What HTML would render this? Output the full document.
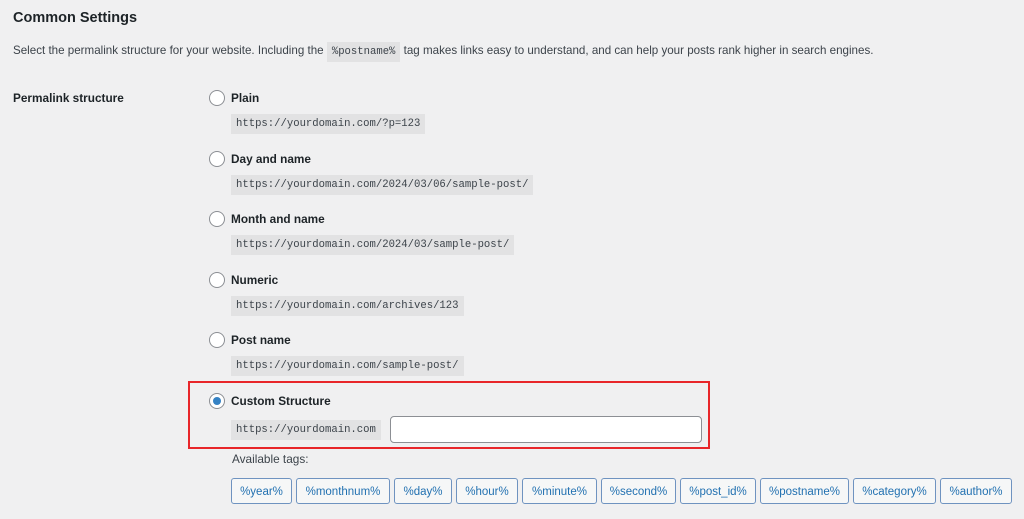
<!DOCTYPE html>
<html><head><style>
body{margin:0;width:1024px;height:519px;background:#f0f0f1;font-family:"Liberation Sans",sans-serif;color:#1d2327;position:relative;overflow:hidden}
.a{position:absolute;white-space:nowrap}
h2{position:absolute;left:13px;top:10px;margin:0;font-size:14.5px;font-weight:600}
.d{left:13px;top:44px;font-size:11.6px;color:#3c434a}
code{font-family:"Liberation Mono",monospace;font-size:10.6px;background:#e2e2e3;padding:4px 5px;color:#3c434a}
.r{position:absolute;left:209px;width:14px;height:14px;border:1px solid #8c8f94;border-radius:50%;background:#fff}
.l{left:231px;font-size:11.8px;font-weight:600}
.c{left:231px}
.t{position:absolute;top:478px;height:26px;border:1px solid #6f93c0;border-radius:3px;background:#f6f7f7;color:#2271b1;font-size:11.5px;line-height:26px;text-align:center;box-sizing:border-box}
</style></head><body>
<h2>Common Settings</h2>
<div class="a d">Select the permalink structure for your website. Including the <code>%postname%</code> tag makes links easy to understand, and can help your posts rank higher in search engines.</div>
<div class="a" style="left:13px;top:91px;font-size:11.8px;font-weight:600">Permalink structure</div>

<div class="r" style="top:90px"></div><div class="a l" style="top:91px">Plain</div>
<div class="a c" style="top:113px"><code>https://yourdomain.com/?p=123</code></div>
<div class="r" style="top:151px"></div><div class="a l" style="top:152px">Day and name</div>
<div class="a c" style="top:174px"><code>https://yourdomain.com/2024/03/06/sample-post/</code></div>
<div class="r" style="top:211px"></div><div class="a l" style="top:212px">Month and name</div>
<div class="a c" style="top:234px"><code>https://yourdomain.com/2024/03/sample-post/</code></div>
<div class="r" style="top:272px"></div><div class="a l" style="top:273px">Numeric</div>
<div class="a c" style="top:295px"><code>https://yourdomain.com/archives/123</code></div>
<div class="r" style="top:332px"></div><div class="a l" style="top:333px">Post name</div>
<div class="a c" style="top:355px"><code>https://yourdomain.com/sample-post/</code></div>

<div class="a" style="left:188px;top:381px;width:518px;height:64px;border:2px solid #e8262a"></div>
<div class="r" style="top:393px"><div style="position:absolute;left:3px;top:3px;width:8px;height:8px;border-radius:50%;background:#3582c4"></div></div>
<div class="a l" style="top:394px">Custom Structure</div>
<div class="a c" style="top:419px"><code>https://yourdomain.com</code></div>
<div class="a" style="left:390px;top:416px;width:312px;height:27px;border:1px solid #8c8f94;border-radius:4px;background:#fff;box-sizing:border-box"></div>
<div class="a" style="left:232px;top:452px;font-size:11.8px;color:#3c434a">Available tags:</div>

<div class="t" style="left:231px;width:61px">%year%</div>
<div class="t" style="left:296px;width:94px">%monthnum%</div>
<div class="t" style="left:394px;width:58px">%day%</div>
<div class="t" style="left:456px;width:62px">%hour%</div>
<div class="t" style="left:522px;width:75px">%minute%</div>
<div class="t" style="left:601px;width:75px">%second%</div>
<div class="t" style="left:680px;width:76px">%post_id%</div>
<div class="t" style="left:760px;width:89px">%postname%</div>
<div class="t" style="left:853px;width:83px">%category%</div>
<div class="t" style="left:940px;width:72px">%author%</div>
</body></html>
